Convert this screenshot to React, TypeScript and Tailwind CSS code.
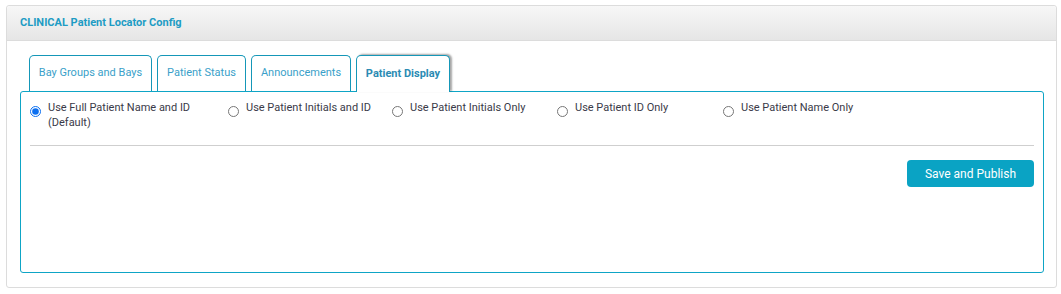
import { useState } from "react"

const tabs = [
  { label: "Bay Groups and Bays", width: "w-[123px]" },
  { label: "Patient Status", width: "w-[89px]" },
  { label: "Announcements", width: "w-[100px]" },
  { label: "Patient Display", width: "w-[94px]" },
]

const options = [
  { id: "full", label: ["Use Full Patient Name and ID", "(Default)"], width: "w-[198px]" },
  { id: "initials-id", label: ["Use Patient Initials and ID"], width: "w-[164px]" },
  { id: "initials", label: ["Use Patient Initials Only"], width: "w-[165px]" },
  { id: "id", label: ["Use Patient ID Only"], width: "w-[166px]" },
  { id: "name", label: ["Use Patient Name Only"], width: "flex-1" },
]

export default function App() {
  const [active, setActive] = useState(3)
  const [selected, setSelected] = useState("full")

  return (
    <div className="min-h-[294px] bg-white pt-[5px] pl-[6px] pr-[4px] font-['Roboto',sans-serif]">
      <div className="rounded-[3px] border border-[#dcdcdc] bg-white">
        <div className="flex h-[35px] items-center rounded-t-[3px] border-b border-[#dcdcdc] bg-gradient-to-b from-[#f7f7f7] to-[#e6e6e6] px-[13px]">
          <h1 className="text-[11px] font-bold text-[#1e9cc4]">CLINICAL Patient Locator Config</h1>
        </div>

        <div className="pt-[14px] pb-[14px] pl-[13px] pr-[12px]">
          <div className="relative z-10 -mb-px ml-[9px] flex items-end gap-[5px]">
            {tabs.map((tab, index) => {
              const isActive = index === active
              return (
                <button
                  key={tab.label}
                  onClick={() => setActive(index)}
                  className={
                    isActive
                      ? `${tab.width} h-[37px] rounded-t-[5px] border border-b-0 border-[#1597b8] bg-white text-[11px] font-bold text-[#2b8bb3] shadow-[2px_-1px_2px_rgba(0,0,0,0.35)]`
                      : `${tab.width} mb-px h-[36px] rounded-t-[5px] border border-b-0 border-[#1597b8] bg-white text-[11px] text-[#3a9fc9]`
                  }
                >
                  {tab.label}
                </button>
              )
            })}
          </div>

          <div className="h-[182px] rounded-[3px] border border-[#0ea5c6] bg-white px-[9px] pt-[8px]">
            <div className="flex">
              {options.map((option) => (
                <label key={option.id} className={`${option.width} flex items-start gap-[7px] cursor-pointer`}>
                  <input
                    type="radio"
                    name="display"
                    checked={selected === option.id}
                    onChange={() => setSelected(option.id)}
                    className="m-0 mt-[6px] h-[11px] w-[11px] shrink-0 accent-[#0b6ff0]"
                  />
                  <span className="text-[11px] leading-[15px] text-[#3a3a48]">
                    {option.label[0]}
                    {option.label[1] && (
                      <>
                        <br />
                        {option.label[1]}
                      </>
                    )}
                  </span>
                </label>
              ))}
            </div>

            <div className="mt-[15px] border-t border-[#cfcfcf]" />

            <div className="mt-[14px] flex justify-end">
              <button className="h-[27px] w-[127px] rounded-[4px] bg-[#0aa3c4] text-[12px] text-white">
                Save and Publish
              </button>
            </div>
          </div>
        </div>
      </div>
    </div>
  )
}
